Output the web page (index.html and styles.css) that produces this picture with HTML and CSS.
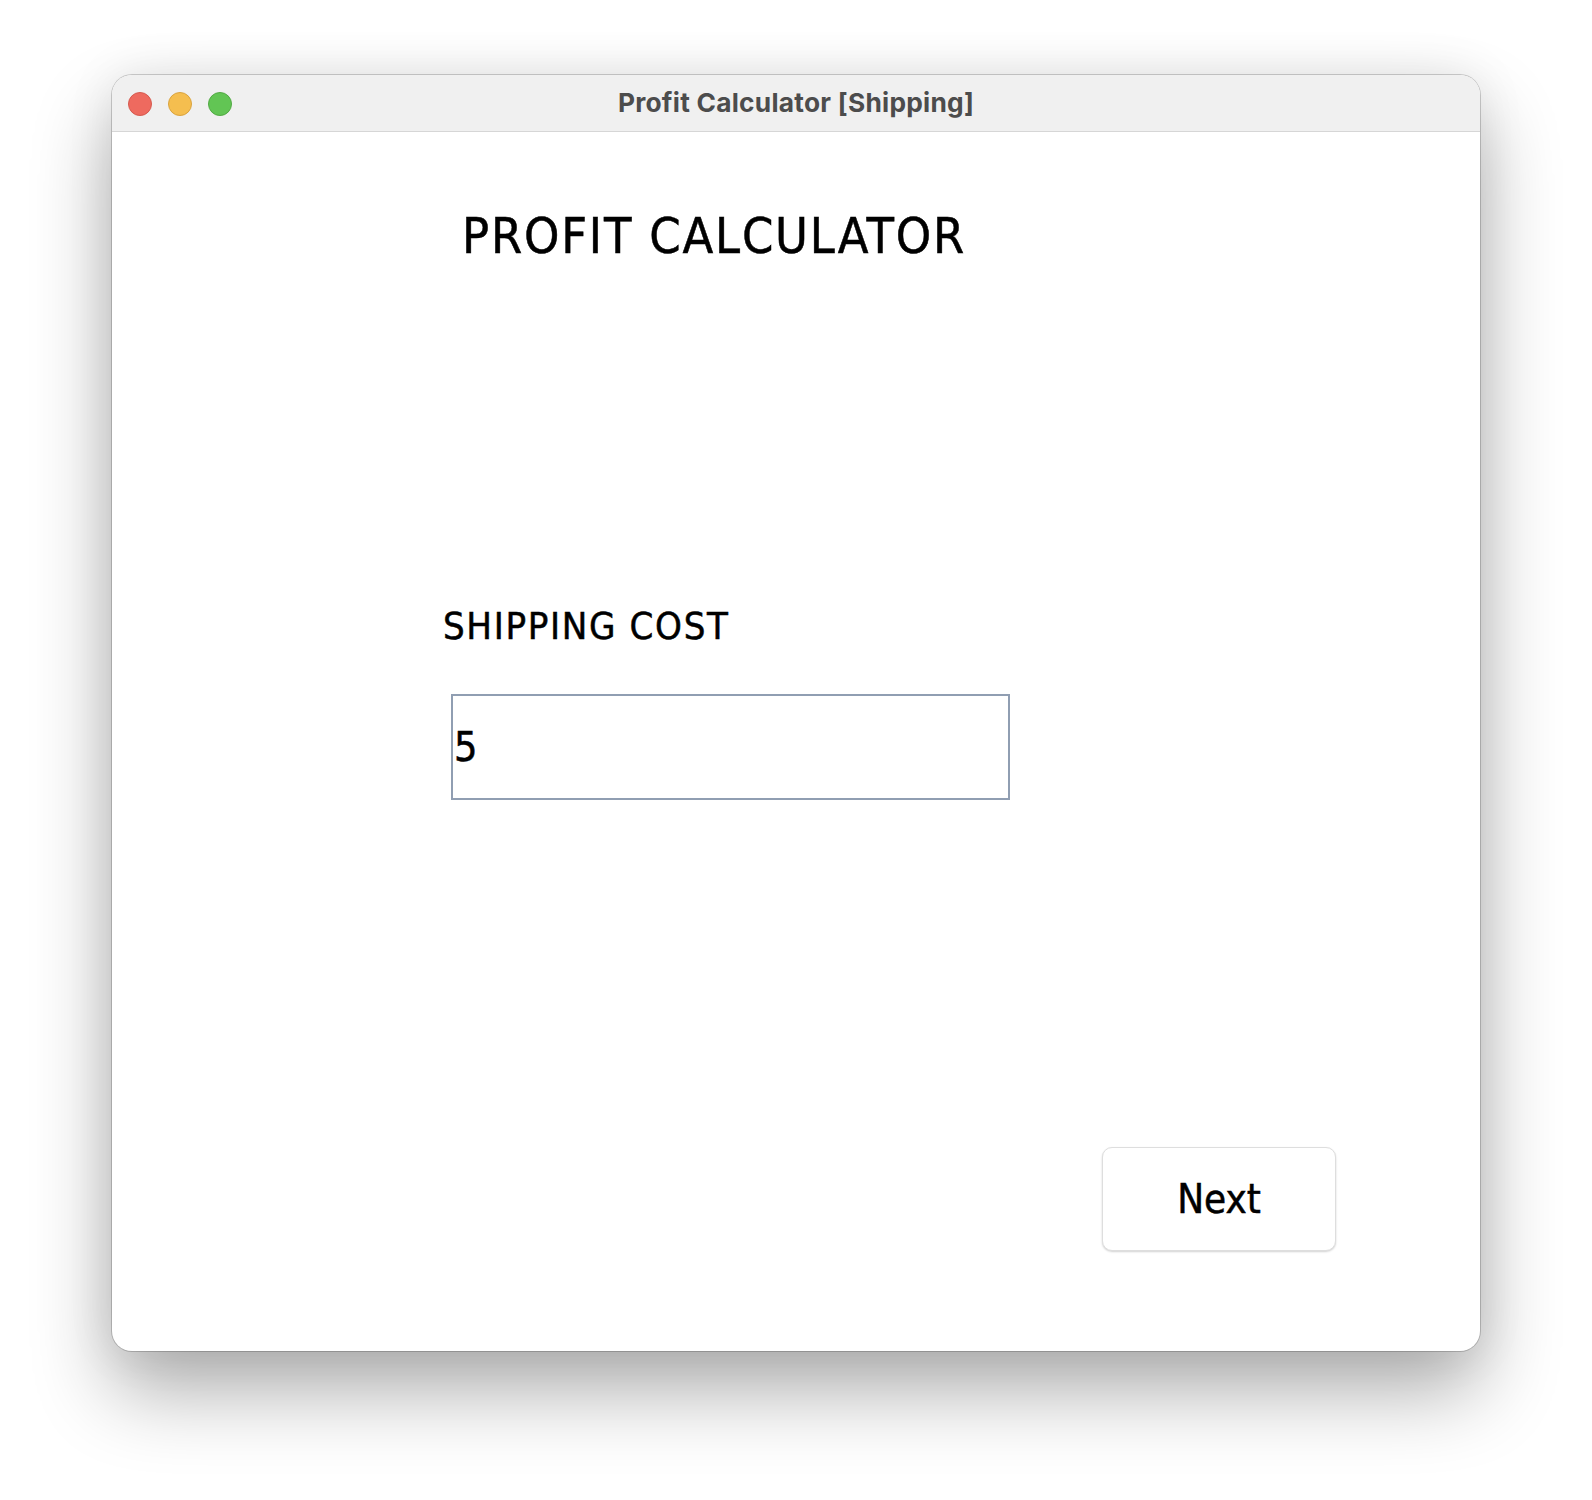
FILE: index.html
```html
<!DOCTYPE html>
<html lang="en">
<head>
<meta charset="utf-8">
<title>Profit Calculator [Shipping]</title>
<link rel="stylesheet" href="styles.css">
</head>
<body>
<div class="window">
  <div class="titlebar">
    <div class="lights">
      <span class="light red"></span>
      <span class="light yellow"></span>
      <span class="light green"></span>
    </div>
    <div class="wtitle">Profit Calculator [Shipping]</div>
    <div></div>
  </div>
  <div class="content">
    <h1 class="heading">PROFIT CALCULATOR</h1>
    <div class="label">SHIPPING COST</div>
    <input class="field" type="text" value="5">
    <div class="actions">
      <button class="next" type="button">Next</button>
    </div>
  </div>
</div>
</body>
</html>
```

FILE: styles.css
```css
html, body {
  margin: 0;
  padding: 0;
  background: #ffffff;
}

body {
  padding: 75px 112px 148px 112px;
}

.window {
  width: 1368px;
  background: #ffffff;
  border-radius: 20px;
  overflow: hidden;
  box-shadow: 0 0 0 1px rgba(0, 0, 0, 0.18),
              0 40px 80px rgba(0, 0, 0, 0.32),
              0 0 50px rgba(0, 0, 0, 0.08);
}

.titlebar {
  height: 56px;
  background: #f0f0f0;
  border-bottom: 1px solid #d6d6d6;
  display: grid;
  grid-template-columns: 1fr auto 1fr;
  align-items: center;
}

.lights {
  display: flex;
  gap: 16px;
  padding-left: 16px;
  padding-top: 2px;
}

.light {
  width: 22px;
  height: 22px;
  border-radius: 50%;
  display: block;
}

.red { background: #ee6a5f; border: 1px solid #d55a4f; }
.yellow { background: #f5be4f; border: 1px solid #d9a33f; }
.green { background: #62c554; border: 1px solid #52a944; }

.wtitle {
  font-family: Inter, "Liberation Sans", sans-serif;
  font-weight: 700;
  font-size: 26.3px;
  color: #4c4c4c;
  padding-bottom: 1px;
  letter-spacing: 0.25px;
}

.content {
  display: flex;
  flex-direction: column;
  align-items: flex-start;
  font-family: "DejaVu Sans Condensed", "DejaVu Sans", sans-serif;
  font-stretch: semi-condensed;
  color: #000000;
  -webkit-text-stroke: 0.5px #000000;
}

.heading {
  margin: 79px 0 0 350px;
  font-size: 50px;
  line-height: 50px;
  font-weight: 400;
  letter-spacing: 1.8px;
}

.label {
  margin: 346px 0 0 331px;
  font-size: 38px;
  line-height: 38px;
  letter-spacing: 1.65px;
}

.field {
  margin: 49px 0 0 339px;
  box-sizing: border-box;
  width: 559px;
  height: 106px;
  border: 2px solid #909eb2;
  border-radius: 0;
  padding: 0 1px;
  font-family: "DejaVu Sans Condensed", "DejaVu Sans", sans-serif;
  font-stretch: semi-condensed;
  font-size: 41px;
  color: #000000;
  -webkit-text-stroke: 0.5px #000000;
  background: #ffffff;
  outline: none;
}

.actions {
  align-self: stretch;
  display: flex;
  justify-content: flex-end;
  padding: 347px 144px 100px 0;
}

.next {
  box-sizing: border-box;
  width: 234px;
  height: 104px;
  background: #ffffff;
  border: 1px solid #dedede;
  border-radius: 10px;
  box-shadow: 0 1px 2px rgba(0, 0, 0, 0.18);
  font-family: "DejaVu Sans Condensed", "DejaVu Sans", sans-serif;
  font-stretch: semi-condensed;
  font-size: 40px;
  color: #000000;
  -webkit-text-stroke: 0.5px #000000;
  padding: 0;
}
```
